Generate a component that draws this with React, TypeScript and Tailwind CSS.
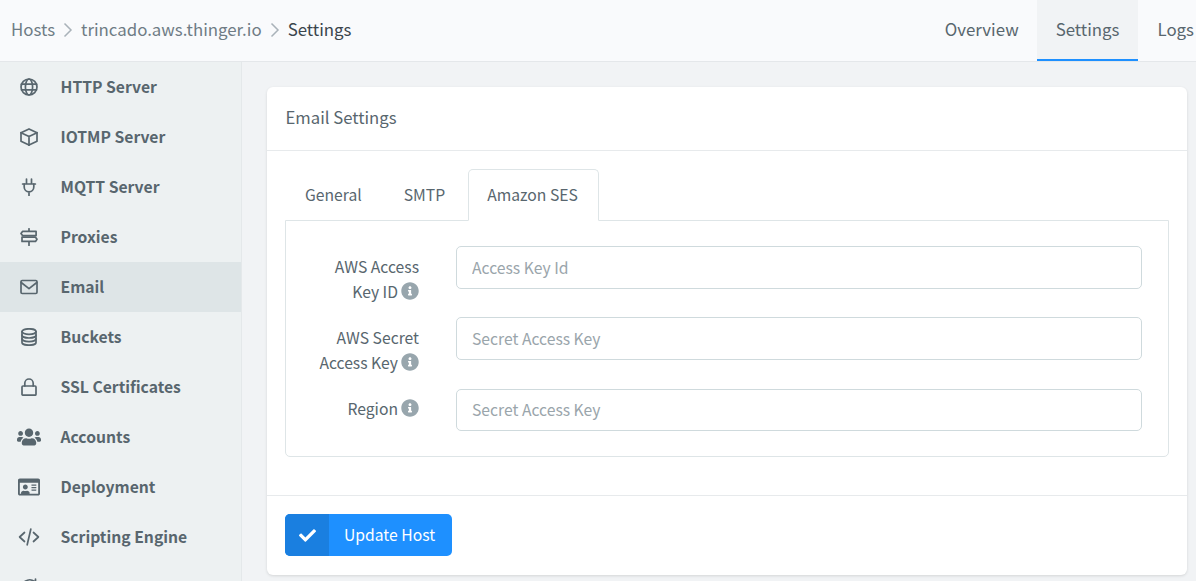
import React from "react";
import { FaUsers, FaRegIdCard, FaInfoCircle, FaCheck } from "react-icons/fa";

const I = ({ children, w = 18, h = 18 }: { children: React.ReactNode; w?: number; h?: number }) => (
  <svg width={w} height={h} viewBox={`0 0 ${w} ${h}`} fill="none" stroke="#58666e" strokeWidth="1.7" strokeLinecap="round" strokeLinejoin="round">
    {children}
  </svg>
);

const icons: Record<string, React.ReactNode> = {
  globe: (
    <I>
      <circle cx="9" cy="9" r="8" />
      <ellipse cx="9" cy="9" rx="3.6" ry="8" />
      <path d="M1.5 6.2h15M1.5 11.8h15" />
    </I>
  ),
  box: (
    <I>
      <path d="M9 .9l8 3.8v8.6l-8 3.8-8-3.8V4.7z" />
      <path d="M1 4.7l8 3.7 8-3.7M9 8.4v9" />
    </I>
  ),
  plug: (
    <I>
      <path d="M6.5 1v4.8M11.5 1v4.8M2.6 6h12.8" />
      <path d="M4.2 6v3a4.8 4.8 0 009.6 0V6M9 14v3.5" />
    </I>
  ),
  signs: (
    <I>
      <path d="M9 .8v2.4M9 14v3.4" />
      <path d="M2.5 3.4h13.6v4.2H2.5L1 5.5z" />
      <path d="M2 9.2h13.5l1.5 2.1-1.5 2.1H2z" />
    </I>
  ),
  mail: (
    <I>
      <rect x="1" y="2.5" width="16" height="13" rx="1.2" />
      <path d="M1.2 4.5L9 10.6l7.8-6.1" />
    </I>
  ),
  db: (
    <I>
      <ellipse cx="9" cy="3.6" rx="7" ry="2.8" />
      <path d="M2 3.6v10.8c0 1.5 3.1 2.8 7 2.8s7-1.3 7-2.8V3.6" />
      <path d="M2 7.2c0 1.5 3.1 2.8 7 2.8s7-1.3 7-2.8M2 10.8c0 1.5 3.1 2.8 7 2.8s7-1.3 7-2.8" />
    </I>
  ),
  lock: (
    <I>
      <rect x="2" y="8" width="14" height="9.2" rx="1" />
      <path d="M4.8 8V5.2a4.2 4.2 0 018.4 0V8" />
    </I>
  ),
  users: <FaUsers size={24} color="#58666e" />,
  id: <FaRegIdCard size={22} color="#58666e" />,
  code: (
    <I w={22}>
      <path d="M6.5 4.5L1.6 9l4.9 4.5M15.5 4.5L20.4 9l-4.9 4.5M12.8 1.2L9.2 16.8" />
    </I>
  ),
  sync: (
    <I>
      <path d="M2 12a8 8 0 0112.5-8.5M15.5 1v3.5H12" />
    </I>
  ),
};

const nav: [string, string][] = [
  ["globe", "HTTP Server"],
  ["box", "IOTMP Server"],
  ["plug", "MQTT Server"],
  ["signs", "Proxies"],
  ["mail", "Email"],
  ["db", "Buckets"],
  ["lock", "SSL Certificates"],
  ["users", "Accounts"],
  ["id", "Deployment"],
  ["code", "Scripting Engine"],
  ["sync", ""],
];

const Chevron = () => (
  <svg width="10" height="16" viewBox="0 0 10 16" fill="none" stroke="#a9b2b9" strokeWidth="1.5" className="mx-[8px] mt-[1px]">
    <path d="M1.5 1.5l6.5 6.5-6.5 6.5" />
  </svg>
);

const Info = () => <FaInfoCircle size={18} color="#98a6ad" className="inline-block ml-[3px] align-[-2px]" />;

const Field = ({ label, placeholder }: { label: React.ReactNode; placeholder: string }) => (
  <div className="flex h-[42.6px] gap-[37px]">
    <div className="w-[108px] shrink-0 text-right leading-[25px] pt-[7.5px] text-[#58666e]">{label}</div>
    <input
      placeholder={placeholder}
      className="flex-1 min-w-0 rounded-[5px] border border-[#cfdadd] bg-white px-[15px] text-[15.7px] text-[#58666e] outline-none placeholder:text-[#9aa5ab]"
    />
  </div>
);

export default function App() {
  return (
    <div
      className="h-[581px] w-[1196px] overflow-hidden flex flex-col bg-[#f1f3f5] text-[15.7px] text-[#58666e]"
      style={{ fontFamily: '"Noto Sans CJK SC", "Noto Sans", sans-serif' }}
    >
      <header className="h-[62px] shrink-0 flex items-center justify-between bg-[#f9fafc] border-b border-[#e4e7ea] text-[16.85px]">
        <nav className="flex items-center pl-[11px] pb-[3px] leading-[24px]">
          <span className="text-[#6f7c85]">Hosts</span>
          <Chevron />
          <span className="text-[#6f7c85]">trincado.aws.thinger.io</span>
          <Chevron />
          <span className="text-[#3a454d]">Settings</span>
        </nav>
        <div className="flex h-full">
          <div className="pl-[19px] pr-[18px] pb-[3px] flex items-center">Overview</div>
          <div className="px-[19px] pb-[1px] flex items-center bg-[#f1f3f5] border-b-2 border-[#1e90ff] h-[61px]">Settings</div>
          <div className="pl-[19px] pr-[2px] pb-[3px] flex items-center">Logs</div>
        </div>
      </header>
      <div className="flex flex-1 min-h-0">
        <aside className="w-[242px] shrink-0 bg-[#edf1f2] border-r border-[#e4e8ea] font-bold">
          {nav.map(([icon, text]) => (
            <div key={icon} className={`h-[50px] flex items-center ${icon === "mail" ? "bg-[#dee5e7]" : ""}`}>
              <span className="w-[24px] ml-[17px] mr-[19.5px] flex justify-center">{icons[icon]}</span>
              <span>{text}</span>
            </div>
          ))}
        </aside>
        <main className="flex-1 pt-[25px] pl-[25px] pr-[9px]">
          <section className="h-[488px] bg-white rounded-[6px] shadow-[0_1px_3px_rgba(0,0,0,0.12)]">
            <div className="h-[64px] flex items-center pl-[18.5px] pb-[2px] border-b border-[#e7eaec] text-[16.7px]">Email Settings</div>
            <div className="h-[345px] px-[18px] pt-[18px] border-b border-[#e7eaec]">
              <div className="flex h-[52px] pl-[1px] relative z-10">
                <div className="px-[19px] pt-[12px] leading-[28px]">General</div>
                <div className="px-[19px] pt-[12px] leading-[28px] ml-[4px]">SMTP</div>
                <div className="pl-[18px] pr-[20px] pt-[11px] leading-[28px] ml-[4px] bg-white border border-[#dee5e7] border-b-white rounded-t-[5px]">Amazon SES</div>
              </div>
              <div className="-mt-[1px] h-[237px] border border-[#dee5e7] rounded-b-[5px] pt-[25px] pb-[25px] pl-[25px] pr-[26px] flex flex-col gap-[28.8px]">
                <Field label={<>AWS Access<br />Key ID<Info /></>} placeholder="Access Key Id" />
                <Field label={<>AWS Secret<br />Access Key<Info /></>} placeholder="Secret Access Key" />
                <Field label={<>Region<Info /></>} placeholder="Secret Access Key" />
              </div>
            </div>
            <div className="px-[18px] pt-[18px]">
              <button className="w-[167px] h-[42px] flex rounded-[5px] overflow-hidden bg-[#1e90ff] text-white">
                <span className="w-[44px] h-full bg-[#1a7fe0] flex items-center justify-center">
                  <FaCheck size={17} />
                </span>
                <span className="pl-[15px] leading-[42px]">Update Host</span>
              </button>
            </div>
          </section>
        </main>
      </div>
    </div>
  );
}
